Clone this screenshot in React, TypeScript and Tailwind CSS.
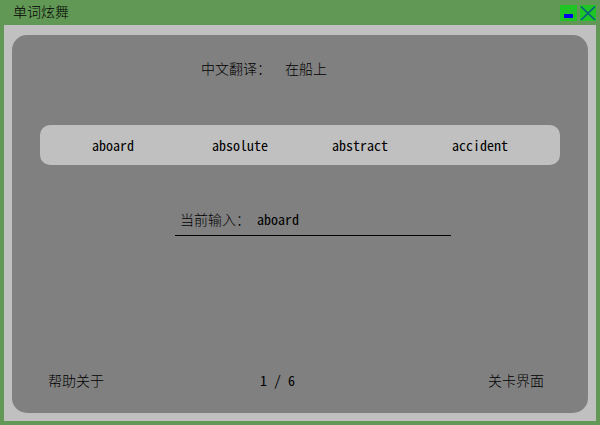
import { useState } from "react";

const words = ["aboard", "absolute", "abstract", "accident"];

const hanzi = "font-['KaiTi','Noto_Sans_CJK_SC',sans-serif] font-light text-[14px] leading-5";
const latin = "font-['Noto_Sans_Mono_CJK_SC','DejaVu_Sans_Mono',monospace] text-[14px] leading-5";

function TitleBar() {
  return (
    <header className="flex h-[25px] items-start pl-[9px]">
      <h1 className={`${hanzi} grow pt-px`}>单词炫舞</h1>
      <div className="flex gap-[3px] pt-[5px]">
        <button type="button" aria-label="最小化" className="h-4 w-[17px] bg-[#1fc425]">
          <svg viewBox="0 0 17 16" className="block h-4 w-[17px]">
            <rect x="4" y="9" width="9" height="4" fill="#0000f0" />
          </svg>
        </button>
        <button type="button" aria-label="关闭" className="size-4 bg-[#1fc425]">
          <svg viewBox="0 0 16 16" className="block size-4">
            <path d="M1 1.5L15 15M15 1.5L1 15" stroke="#075a86" strokeWidth="1.6" fill="none" />
          </svg>
        </button>
      </div>
    </header>
  );
}

export default function App() {
  const [answer, setAnswer] = useState("aboard");

  return (
    <div className="flex min-h-screen flex-col bg-[#629855] px-1 pb-1 text-black">
      <TitleBar />
      <div className="flex grow flex-col bg-[#c0c0c0] px-2 pt-[10px] pb-2">
        <main className="flex grow flex-col rounded-[15px] bg-[#808080] px-7 pt-[23px] pb-[23px]">
          <p className={`${hanzi} ml-[161px] flex gap-[14px]`}>
            <span>中文翻译：</span>
            <span>在船上</span>
          </p>

          <div className="mt-[47px] grid h-10 grid-cols-4 rounded-[10px] bg-[#c0c0c0] px-5">
            {words.map((word) => (
              <button
                key={word}
                type="button"
                onClick={() => setAnswer(word)}
                className={`${latin} pl-8 text-left`}
              >
                {word}
              </button>
            ))}
          </div>

          <div className="mt-[44px] ml-[135px] flex w-[276px] items-center border-b border-black pb-[6px] pl-[5px]">
            <label htmlFor="answer" className={`${hanzi} shrink-0`}>
              当前输入：
            </label>
            <input
              id="answer"
              type="text"
              value={answer}
              onChange={(event) => setAnswer(event.target.value)}
              className={`${latin} ml-[7px] h-5 min-w-0 grow bg-transparent outline-none`}
            />
          </div>

          <footer className="mt-auto flex items-center pr-4 pl-2">
            <button type="button" className={hanzi}>
              帮助关于
            </button>
            <span className={`${latin} ml-[156px]`}>1 / 6</span>
            <button type="button" className={`${hanzi} ml-auto`}>
              关卡界面
            </button>
          </footer>
        </main>
      </div>
    </div>
  );
}
